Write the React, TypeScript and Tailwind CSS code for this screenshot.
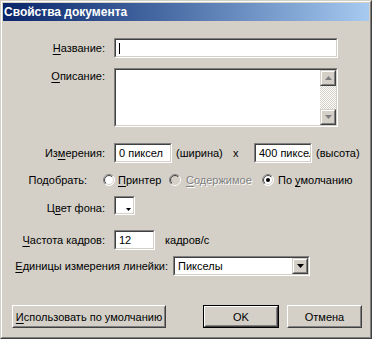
import type { ReactNode } from "react";

function U({ children }: { children: string }) {
  return <span className="underline underline-offset-2">{children}</span>;
}

function Sunken({ className, children }: { className: string; children?: ReactNode }) {
  return (
    <div className={`border border-t-[#808080] border-l-[#808080] border-r-white border-b-white ${className}`}>
      <div className="h-full border border-t-[#404040] border-l-[#404040] border-r-[#d4d0c8] border-b-[#d4d0c8] bg-white flex items-center overflow-hidden">
        {children}
      </div>
    </div>
  );
}

function Raised({ className, children }: { className: string; children?: ReactNode }) {
  return (
    <div className={`border border-t-[#d4d0c8] border-l-[#d4d0c8] border-r-[#404040] border-b-[#404040] ${className}`}>
      <div className="h-full border border-t-white border-l-white border-r-[#808080] border-b-[#808080] bg-[#d4d0c8] flex items-center justify-center">
        {children}
      </div>
    </div>
  );
}

function Button({ label, isDefault, className }: { label: ReactNode; isDefault?: boolean; className: string }) {
  const inner = (
    <div className="h-full border border-t-white border-l-white border-r-[#404040] border-b-[#404040]">
      <div className="h-full border border-t-[#d4d0c8] border-l-[#d4d0c8] border-r-[#808080] border-b-[#808080] flex items-center justify-center bg-[#d4d0c8]">
        {label}
      </div>
    </div>
  );
  return isDefault ? (
    <div className={`h-[23px] border border-black ${className}`}>{inner}</div>
  ) : (
    <div className={`h-[23px] ${className}`}>{inner}</div>
  );
}

function Arrow({ up, color }: { up?: boolean; color: string }) {
  return (
    <svg width="7" height="4" viewBox="0 0 7 4">
      <path d={up ? "M3.5 0L7 4H0z" : "M0 0h7L3.5 4z"} fill={color} />
    </svg>
  );
}

function Radio({ checked, disabled }: { checked?: boolean; disabled?: boolean }) {
  return (
    <svg width="12" height="12" viewBox="0 0 12 12" className="shrink-0">
      <defs>
        <linearGradient id="ro" x1="0" y1="0" x2="1" y2="1">
          <stop offset="0.5" stopColor="#808080" />
          <stop offset="0.5" stopColor="#ffffff" />
        </linearGradient>
        <linearGradient id="ri" x1="0" y1="0" x2="1" y2="1">
          <stop offset="0.5" stopColor="#404040" />
          <stop offset="0.5" stopColor="#d4d0c8" />
        </linearGradient>
      </defs>
      <circle cx="6" cy="6" r="5.5" fill={disabled ? "#d4d0c8" : "#ffffff"} stroke="url(#ro)" />
      <circle cx="6" cy="6" r="4.5" fill="none" stroke="url(#ri)" />
      {checked && <circle cx="6" cy="6" r="2" fill="#000" />}
    </svg>
  );
}

export default function App() {
  return (
    <div className="w-[372px] h-[339px] bg-[#d4d0c8] border border-t-[#d4d0c8] border-l-[#d4d0c8] border-r-[#404040] border-b-[#404040] text-[11px] leading-[14px] text-black font-['Liberation_Sans',Arial,sans-serif]">
      <div className="h-full border border-t-white border-l-white border-r-[#808080] border-b-[#808080] p-px flex flex-col">
        <div className="h-[18px] bg-linear-to-r from-[#0a246a] to-[#a6caf0] flex items-center pl-px">
          <span className="text-white font-bold text-[12px]">Свойства документа</span>
        </div>

        <div className="mt-[17px] flex items-center">
          <span className="w-[102px] text-right"><U>Н</U>азвание:</span>
          <Sunken className="ml-[9px] w-[224px] h-[20px]">
            <div className="ml-[3px] w-px h-[11px] bg-black" />
          </Sunken>
        </div>

        <div className="mt-[10px] flex items-start">
          <span className="w-[102px] text-right pt-px"><U>О</U>писание:</span>
          <Sunken className="ml-[9px] w-[224px] h-[59px]">
            <div className="ml-auto w-[16px] h-full flex flex-col">
              <Raised className="h-[16px]"><Arrow up color="#808080" /></Raised>
              <div className="flex-1 bg-[image:repeating-conic-gradient(#ffffff_0_25%,#d4d0c8_0_50%)] bg-[length:2px_2px]" />
              <Raised className="h-[16px]"><Arrow color="#808080" /></Raised>
            </div>
          </Sunken>
        </div>

        <div className="mt-[16px] flex items-center">
          <span className="w-[102px] text-right">Из<U>м</U>ерения:</span>
          <Sunken className="ml-[9px] w-[58px] h-[20px]">
            <span className="pl-[3px] whitespace-nowrap">0 пиксел</span>
          </Sunken>
          <span className="ml-[4px] w-[54px]">(ширина)</span>
          <span className="w-[24px] pl-[3px]">x</span>
          <Sunken className="w-[58px] h-[20px]">
            <span className="pl-[3px] whitespace-nowrap">400 пиксел</span>
          </Sunken>
          <span className="ml-[4px]">(высота)</span>
        </div>

        <div className="mt-[10px] flex items-center">
          <span className="w-[84px] text-right">Подобрать:</span>
          <div className="ml-[16px] w-[66px] flex items-center gap-[3px]">
            <Radio />
            <span><U>П</U>ринтер</span>
          </div>
          <div className="w-[93px] flex items-center gap-[5px]">
            <Radio disabled />
            <span className="text-[#808080] [text-shadow:1px_1px_0_#ffffff]"><U>С</U>одержимое</span>
          </div>
          <div className="flex items-center gap-[4px]">
            <Radio checked />
            <span>По <U>у</U>молчанию</span>
          </div>
        </div>

        <div className="mt-[9px] flex items-end">
          <span className="w-[102px] text-right">Ц<U>в</U>ет фона:</span>
          <div className="ml-[9px] w-[21px] h-[19px] border border-t-[#808080] border-l-[#808080] border-r-white border-b-white">
            <div className="h-full border border-t-[#404040] border-l-[#404040] border-r-[#d4d0c8] border-b-[#d4d0c8] bg-white flex items-end justify-end pr-[2px] pb-[2px]">
              <svg width="5" height="3" viewBox="0 0 5 3"><path d="M0 0h5L2.5 3z" fill="#000" /></svg>
            </div>
          </div>
        </div>

        <div className="mt-[15px] flex items-center">
          <span className="w-[102px] text-right"><U>Ч</U>астота кадров:</span>
          <Sunken className="ml-[9px] w-[41px] h-[20px]">
            <span className="pl-[3px]">12</span>
          </Sunken>
          <span className="ml-[10px]">кадров/с</span>
        </div>

        <div className="mt-[6px] flex items-center">
          <span className="w-[165px] text-right"><U>Е</U>диницы измерения линейки:</span>
          <Sunken className="ml-[5px] w-[137px] h-[20px]">
            <span className="pl-[3px] flex-1">Пикселы</span>
            <Raised className="w-[16px] h-[16px]"><Arrow color="#000" /></Raised>
          </Sunken>
        </div>

        <div className="mt-[29px] flex items-center">
          <Button className="ml-[9px] w-[154px]" label={<span><U>И</U>спользовать по умолчанию</span>} />
          <Button className="ml-[37px] w-[76px]" isDefault label="OK" />
          <Button className="ml-[8px] w-[75px]" label="Отмена" />
        </div>
      </div>
    </div>
  );
}
